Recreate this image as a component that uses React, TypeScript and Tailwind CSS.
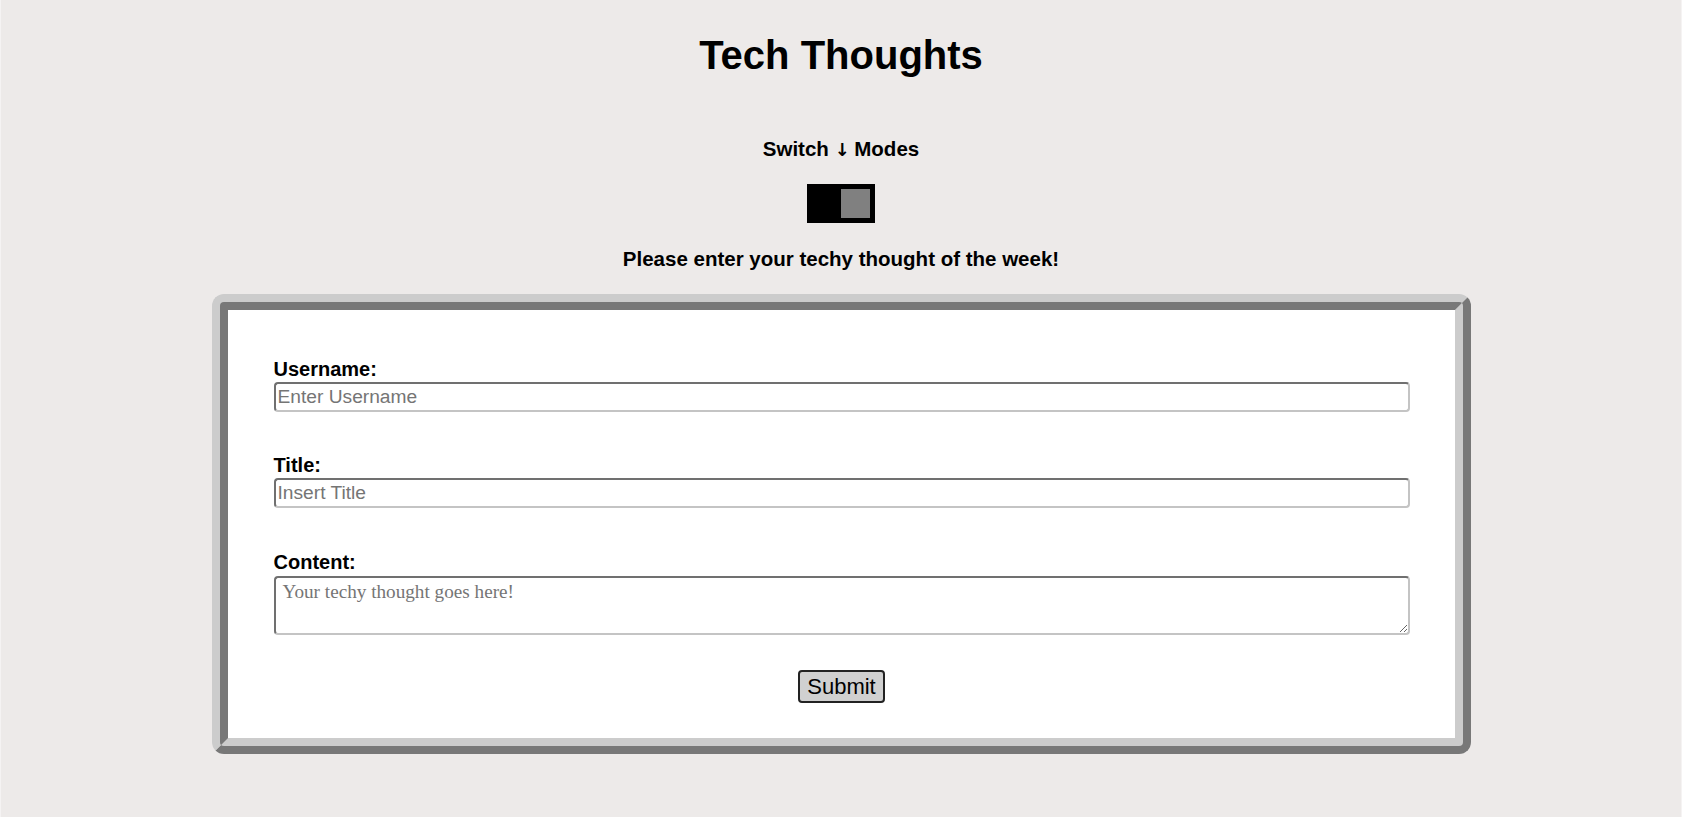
import * as React from 'react'

const sans = "font-['Liberation_Sans',Arial,sans-serif]"

function ModeToggle() {
  const [dark, setDark] = React.useState(false)

  return (
    <button
      type="button"
      onClick={() => setDark(d => !d)}
      className={`mt-[23px] flex h-[39px] w-[68px] items-center bg-black px-[5px] ${dark ? 'justify-start' : 'justify-end'}`}
    >
      <span className="block h-[29px] w-[29px] bg-[#808080]" />
    </button>
  )
}

function Field({
  label,
  id,
  placeholder,
  className
}: {
  label: string
  id: string
  placeholder: string
  className?: string
}) {
  return (
    <div className={`flex flex-col ${className ?? ''}`}>
      <label htmlFor={id} className={`${sans} text-[20px] leading-[24px] font-bold text-black`}>
        {label}
      </label>
      <input
        id={id}
        placeholder={placeholder}
        className={`${sans} mt-[1px] h-[30px] w-full rounded-[4px] border-2 border-[#c4c4c4] [border-style:inset] bg-white px-[2px] py-[2px] text-[19.2px] text-black placeholder:text-[#757575] outline-none`}
      />
    </div>
  )
}

export default function App() {
  const [thought, setThought] = React.useState('')

  return (
    <div className={`${sans} min-h-screen border-x border-[#f5f3f3] bg-[#edeae9] pb-[65px]`}>
      <div className="flex flex-col items-center">
        <h1 className="mt-[31px] text-[40px] leading-[48px] font-bold text-black">
          Tech Thoughts
        </h1>

        <p className="mt-[58px] h-[24px] text-[20.5px] leading-[24px] font-bold text-black">
          Switch{' '}
          <span className="inline-block w-[14px] text-center font-['DejaVu_Sans'] text-[18px] leading-[18px] font-bold text-black">
            &#x2193;&#xFE0E;
          </span>{' '}
          Modes
        </p>

        <ModeToggle />

        <p className="mt-[24px] text-[20.5px] leading-[24px] font-bold text-black">
          Please enter your techy thought of the week!
        </p>

        <form
          onSubmit={e => e.preventDefault()}
          className="mt-[23px] flex w-[1259px] flex-col rounded-[12px] border-[16px] border-[#cccccc] [border-style:ridge] bg-white pt-[47px] pb-[35px] pl-[46px] pr-[45px]"
        >
          <Field label="Username:" id="username" placeholder="Enter Username" />
          <Field label="Title:" id="title" placeholder="Insert Title" className="mt-[41px]" />

          <div className="mt-[42px] flex flex-col">
            <label htmlFor="content" className="text-[20px] leading-[24px] font-bold text-black">
              Content:
            </label>
            <textarea
              id="content"
              value={thought}
              onChange={e => setThought(e.target.value)}
              placeholder="Your techy thought goes here!"
              className="mt-[2px] h-[59px] w-full rounded-[4px] border-2 border-[#c4c4c4] [border-style:inset] bg-white px-[7px] pt-[3px] font-['Liberation_Serif','Times_New_Roman',serif] text-[19.2px] leading-[22px] text-black placeholder:text-[#757575] outline-none"
            />
          </div>

          <div className="mt-[35px] flex justify-center">
            <button
              type="submit"
              className="rounded-[4px] border-2 border-[#222222] bg-[#d0d0d0] px-[7.5px] py-[2px] text-[22px] leading-[25px] text-black"
            >
              Submit
            </button>
          </div>
        </form>
      </div>
    </div>
  )
}
